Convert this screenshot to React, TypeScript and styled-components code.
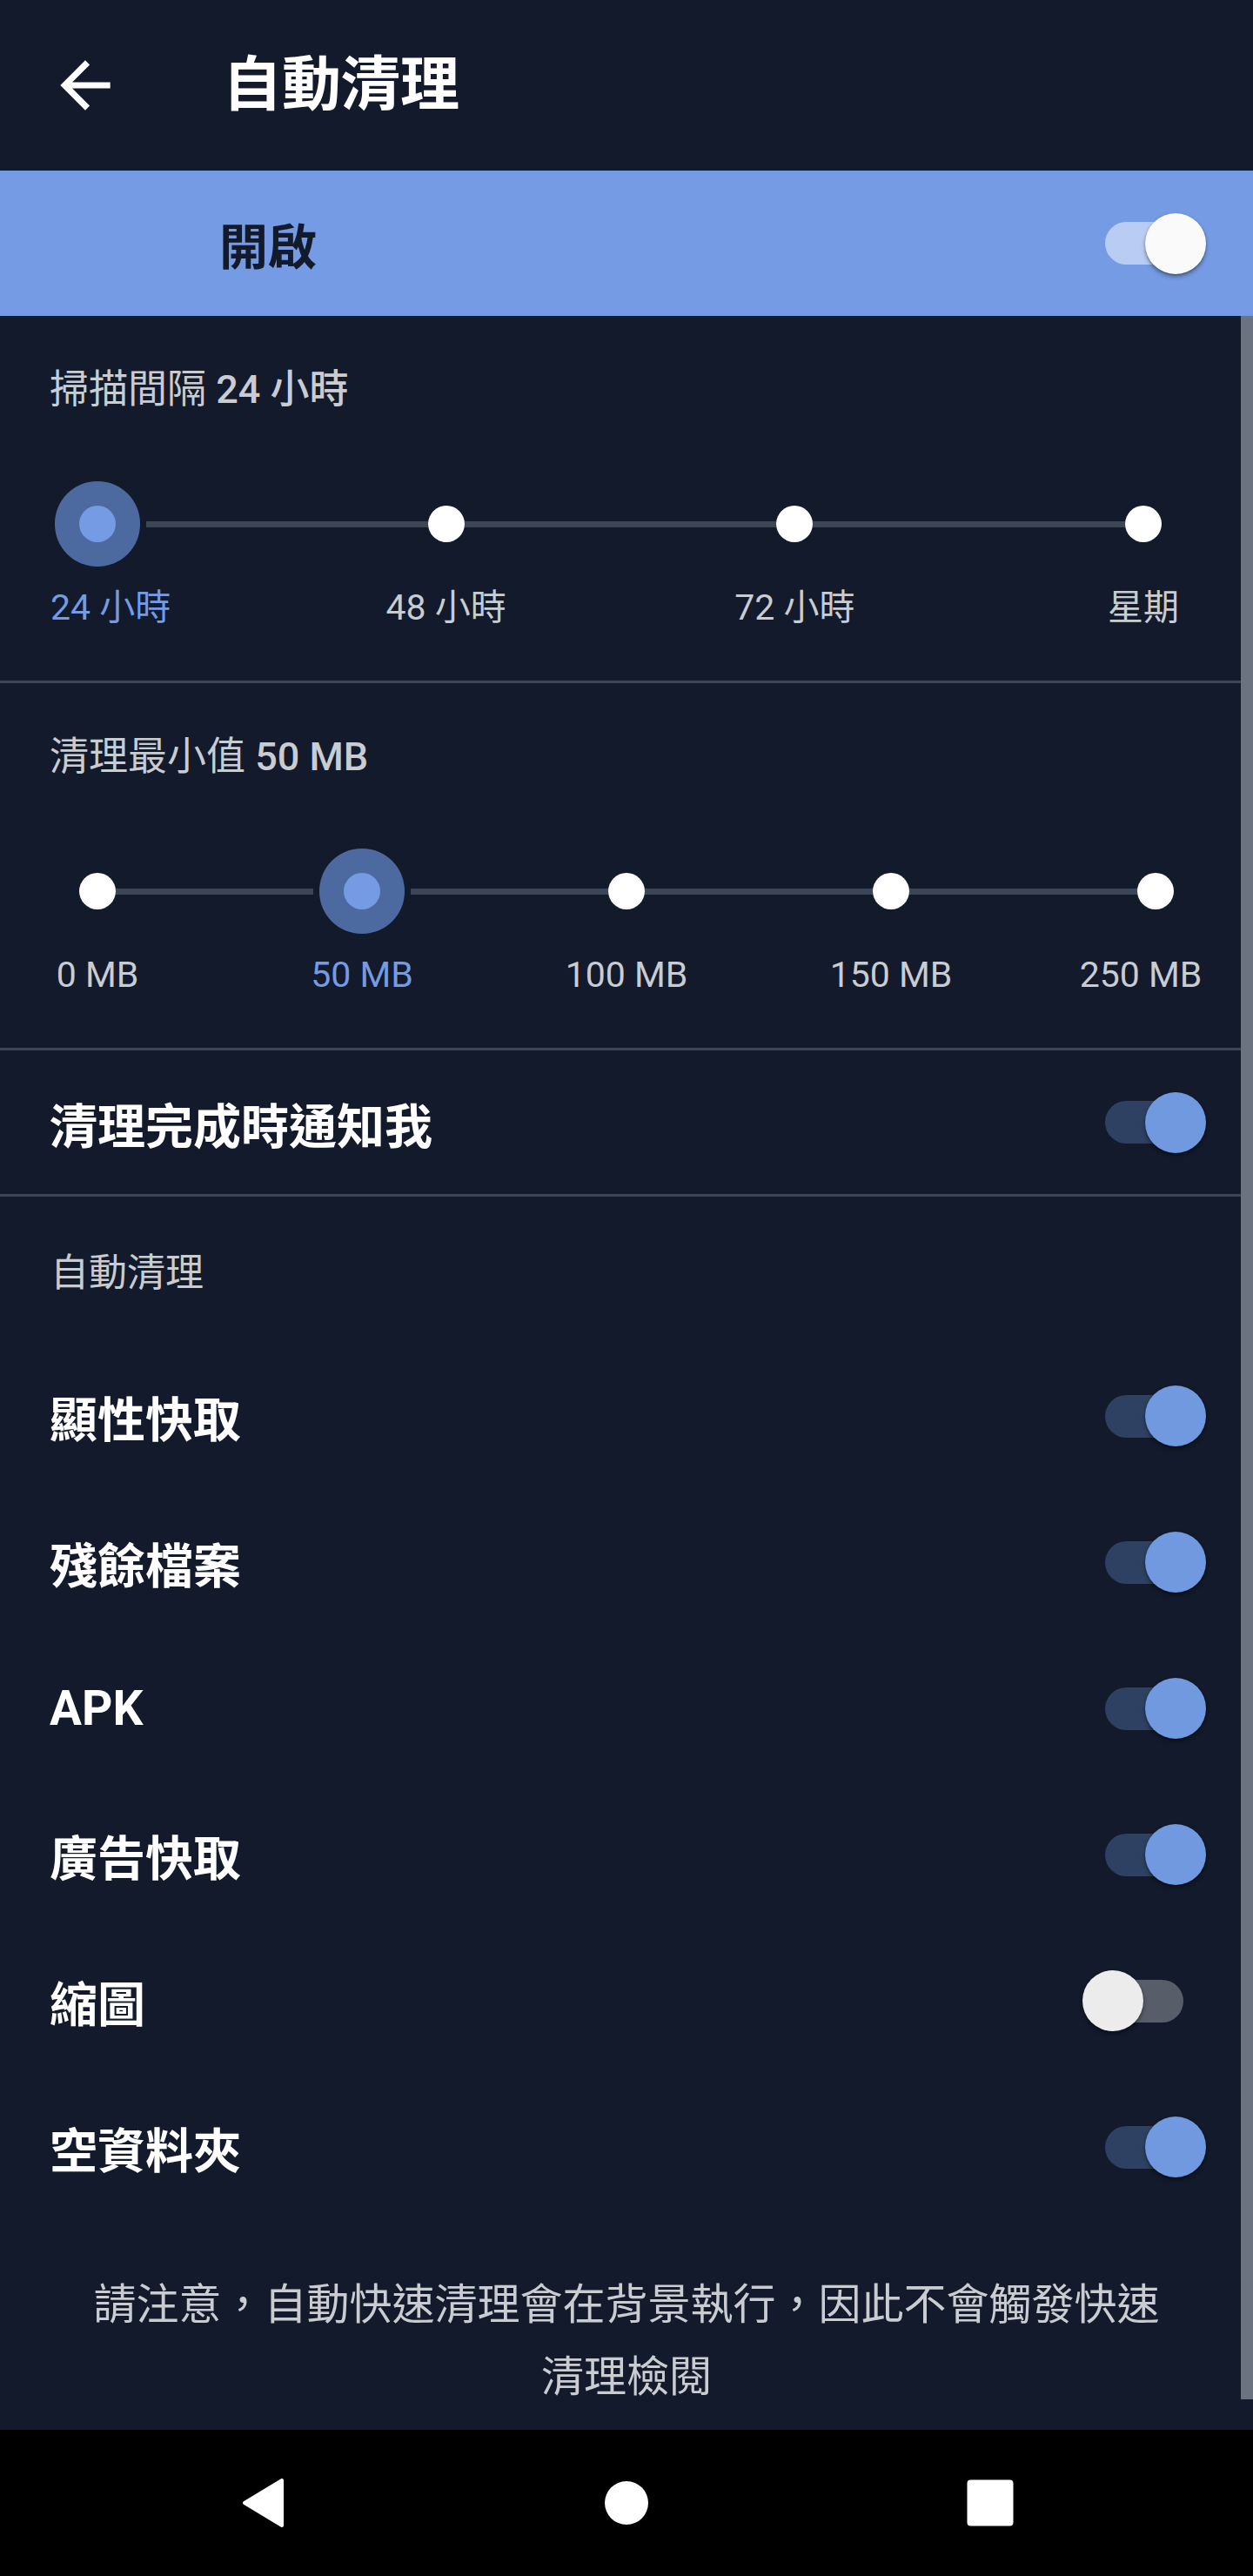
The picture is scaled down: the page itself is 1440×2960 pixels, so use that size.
import React from "react";
import styled, { createGlobalStyle, css } from "styled-components";

const BG = "#121a2b";
const BLUE = "#749be3";
const HALO = "#4d6aa0";
const LINE = "#3c4654";
const GREY = "#c9ccd1";
const FONT = `Roboto, "Noto Sans CJK TC", "Noto Sans", sans-serif`;

const Global = createGlobalStyle`
  html, body { margin: 0; padding: 0; background: ${BG}; }
  body { font-family: ${FONT}; -webkit-font-smoothing: antialiased; }
  * { box-sizing: border-box; }
`;

const Screen = styled.div`
  width: 1440px;
  min-height: 2960px;
  background: ${BG};
  display: flex;
  flex-direction: column;
  font-family: ${FONT};
`;

const Header = styled.header`
  height: 196px;
  display: flex;
  align-items: center;
  padding-left: 55px;
  gap: 115px;
`;

const BackIcon = styled.svg`
  width: 86px;
  height: 86px;
  flex-shrink: 0;
  fill: #ffffff;
`;

const Title = styled.h1`
  margin: 0;
  font-size: 68px;
  font-weight: 700;
  color: #ffffff;
  line-height: 1;
`;

const MasterBand = styled.div`
  height: 167px;
  background: ${BLUE};
  display: flex;
  align-items: center;
  justify-content: space-between;
  padding: 0 54px 0 252px;
`;

const MasterLabel = styled.span`
  font-size: 56px;
  font-weight: 700;
  color: ${BG};
`;

const Content = styled.main`
  position: relative;
  display: flex;
  flex-direction: column;
`;

const ScrollThumb = styled.div`
  position: absolute;
  top: 0;
  right: 0;
  width: 14px;
  height: 2394px;
  background: #6b7280;
`;

const Section = styled.section`
  padding: 55px 0 56px;
  display: flex;
  flex-direction: column;
`;

const SectionTitle = styled.div`
  padding-left: 57px;
  font-size: 45px;
  line-height: 60px;
  color: ${GREY};
  font-weight: 400;
`;

const Value = styled.span`
  font-weight: 500;
`;

const Divider = styled.hr`
  margin: 0;
  border: 0;
  height: 3px;
  background: ${LINE};
`;

const SliderRow = styled.div<{ $left: number; $right: number }>`
  margin-top: 74px;
  height: 100px;
  display: flex;
  align-items: center;
  padding: 0 ${(p) => p.$right}px 0 ${(p) => p.$left}px;
`;

const Dot = styled.div<{ $active?: boolean }>`
  position: relative;
  z-index: 1;
  width: 42px;
  height: 42px;
  border-radius: 50%;
  flex-shrink: 0;
  background: #ffffff;
  ${(p) =>
    p.$active &&
    css`
      background: ${BLUE};
      box-shadow: 0 0 0 28px ${HALO}, 0 0 0 35px ${BG};
    `}
`;

const Segment = styled.div`
  flex: 1;
  height: 7px;
  background: ${LINE};
`;

const LabelRow = styled.div<{ $left: number; $right: number }>`
  margin-top: 18px;
  display: flex;
  justify-content: space-between;
  padding: 0 ${(p) => p.$right}px 0 ${(p) => p.$left}px;
`;

const LabelCell = styled.div<{ $active?: boolean; $nudge?: number }>`
  width: 42px;
  display: flex;
  justify-content: center;
  white-space: nowrap;
  font-size: 41px;
  line-height: 56px;
  color: ${(p) => (p.$active ? BLUE : GREY)};
  transform: translateX(${(p) => p.$nudge ?? 0}px);
`;

const ToggleRow = styled.div<{ $h?: number }>`
  height: ${(p) => p.$h ?? 168}px;
  display: flex;
  align-items: center;
  justify-content: space-between;
  padding: 0 54px 0 57px;
`;

const RowLabel = styled.span`
  font-size: 55px;
  font-weight: 700;
  color: #ffffff;
`;

const SubHeader = styled.div`
  height: 168px;
  display: flex;
  align-items: center;
  padding-left: 58px;
  font-size: 44px;
  color: ${GREY};
`;

type Variant = "band" | "dark";

const SwitchBox = styled.div`
  position: relative;
  width: 142px;
  height: 70px;
  flex-shrink: 0;
  display: flex;
  align-items: center;
  padding: 0 26px;
`;

const SwitchTrack = styled.div<{ $on: boolean; $variant: Variant }>`
  flex: 1;
  height: 49px;
  border-radius: 25px;
  background: ${(p) =>
    p.$variant === "band" ? "#b9cdf4" : p.$on ? "#2e4163" : "#575e69"};
`;

const SwitchThumb = styled.div<{ $on: boolean; $variant: Variant }>`
  position: absolute;
  top: 0;
  width: 70px;
  height: 70px;
  border-radius: 50%;
  ${(p) => (p.$on ? "right: 0;" : "left: 0;")}
  background: ${(p) =>
    p.$variant === "band" ? "#fafafa" : p.$on ? "#7099e0" : "#ececec"};
  box-shadow: 0 3px 5px rgba(0, 0, 0, 0.35), 0 1px 2px rgba(0, 0, 0, 0.25);
`;

const Note = styled.p`
  margin: 0;
  padding: 56px 40px 18px;
  text-align: center;
  font-size: 49px;
  line-height: 83px;
  color: ${GREY};
  white-space: nowrap;
`;

const NavBar = styled.nav`
  height: 168px;
  background: #000000;
  display: grid;
  grid-template-columns: repeat(3, 418px);
  justify-content: center;
  align-items: center;
  justify-items: center;
  margin-top: auto;
`;

const NavSvg = styled.svg`
  fill: #ffffff;
  display: block;
`;

function Switch({ on, variant = "dark" }: { on: boolean; variant?: Variant }) {
  return (
    <SwitchBox>
      <SwitchTrack $on={on} $variant={variant} />
      <SwitchThumb $on={on} $variant={variant} />
    </SwitchBox>
  );
}

type Stop = { label: string; nudge?: number };

function StepSlider({
  stops,
  active,
  left,
  right,
}: {
  stops: Stop[];
  active: number;
  left: number;
  right: number;
}) {
  const parts: React.ReactNode[] = [];
  stops.forEach((s, i) => {
    if (i > 0) parts.push(<Segment key={`s${i}`} />);
    parts.push(<Dot key={`d${i}`} $active={i === active} />);
  });
  return (
    <>
      <SliderRow $left={left} $right={right}>
        {parts}
      </SliderRow>
      <LabelRow $left={left} $right={right}>
        {stops.map((s, i) => (
          <LabelCell key={s.label} $active={i === active} $nudge={s.nudge}>
            {s.label}
          </LabelCell>
        ))}
      </LabelRow>
    </>
  );
}

const items: { label: string; on: boolean }[] = [
  { label: "顯性快取", on: true },
  { label: "殘餘檔案", on: true },
  { label: "APK", on: true },
  { label: "廣告快取", on: true },
  { label: "縮圖", on: false },
  { label: "空資料夾", on: true },
];

export default function App() {
  return (
    <>
      <Global />
      <Screen>
        <Header>
          <BackIcon viewBox="0 0 24 24">
            <path d="M20 11H7.83l5.59-5.59L12 4l-8 8 8 8 1.41-1.41L7.83 13H20v-2z" />
          </BackIcon>
          <Title>自動清理</Title>
        </Header>

        <MasterBand>
          <MasterLabel>開啟</MasterLabel>
          <Switch on variant="band" />
        </MasterBand>

        <Content>
          <Section>
            <SectionTitle>
              掃描間隔 <Value>24 小時</Value>
            </SectionTitle>
            <StepSlider
              left={91}
              right={105}
              active={0}
              stops={[
                { label: "24 小時", nudge: 15 },
                { label: "48 小時" },
                { label: "72 小時" },
                { label: "星期" },
              ]}
            />
          </Section>
          <Divider />

          <Section>
            <SectionTitle>
              清理最小值 <Value>50 MB</Value>
            </SectionTitle>
            <StepSlider
              left={91}
              right={91}
              active={1}
              stops={[
                { label: "0 MB" },
                { label: "50 MB" },
                { label: "100 MB" },
                { label: "150 MB" },
                { label: "250 MB", nudge: -17 },
              ]}
            />
          </Section>
          <Divider />

          <ToggleRow $h={165}>
            <RowLabel>清理完成時通知我</RowLabel>
            <Switch on />
          </ToggleRow>
          <Divider />

          <SubHeader>自動清理</SubHeader>
          {items.map((it) => (
            <ToggleRow key={it.label}>
              <RowLabel>{it.label}</RowLabel>
              <Switch on={it.on} />
            </ToggleRow>
          ))}

          <Note>
            請注意，自動快速清理會在背景執行，因此不會觸發快速
            <br />
            清理檢閱
          </Note>

          <ScrollThumb />
        </Content>

        <NavBar>
          <NavSvg width="52" height="60" viewBox="0 0 52 60">
            <path
              d="M48 4 L48 56 L5 30 Z"
              stroke="#ffffff"
              strokeWidth="4"
              strokeLinejoin="round"
            />
          </NavSvg>
          <NavSvg width="50" height="50" viewBox="0 0 50 50">
            <circle cx="25" cy="25" r="25" />
          </NavSvg>
          <NavSvg width="54" height="54" viewBox="0 0 54 54">
            <rect x="0.5" y="0.5" width="53" height="53" rx="4" />
          </NavSvg>
        </NavBar>
      </Screen>
    </>
  );
}
